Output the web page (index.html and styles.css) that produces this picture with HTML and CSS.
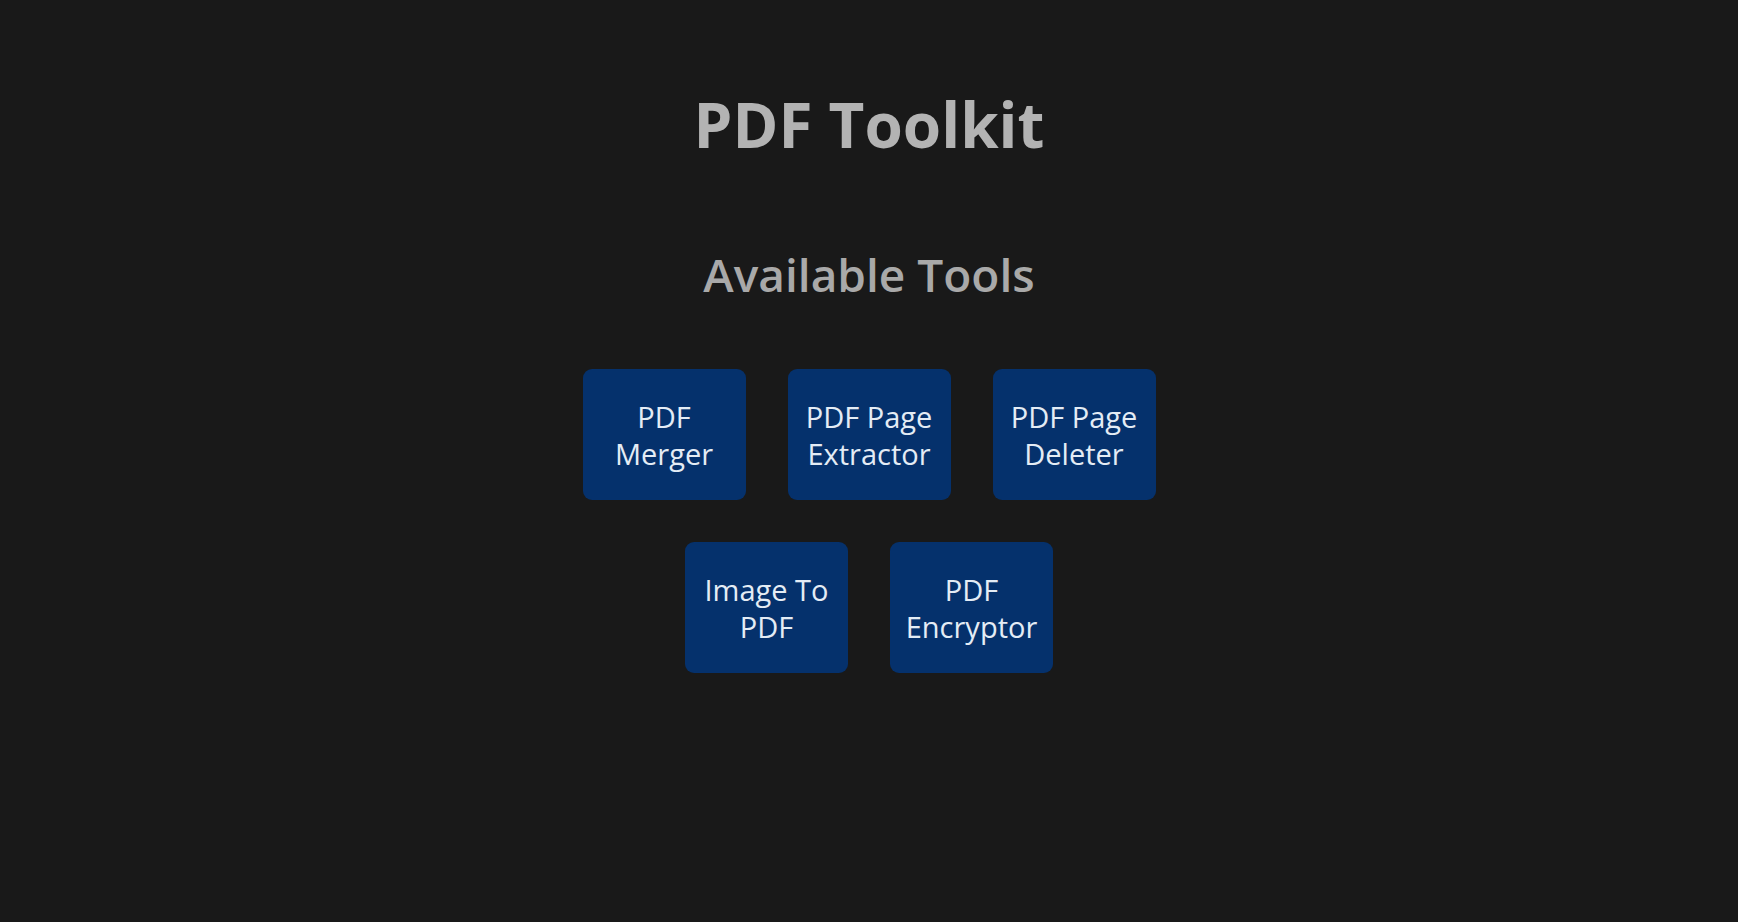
FILE: index.html
```html
<!DOCTYPE html>
<html lang="en">
<head>
<meta charset="utf-8">
<title>PDF Toolkit</title>
<link rel="stylesheet" href="styles.css">
</head>
<body>
<main class="page">
  <h1 class="title">PDF Toolkit</h1>
  <h2 class="subtitle">Available Tools</h2>
  <div class="tools">
    <a class="tool" href="#">PDF Merger</a>
    <a class="tool" href="#">PDF Page Extractor</a>
    <a class="tool" href="#">PDF Page Deleter</a>
    <a class="tool" href="#">Image To PDF</a>
    <a class="tool" href="#">PDF Encryptor</a>
  </div>
</main>
</body>
</html>
```

FILE: styles.css
```css
html, body {
  margin: 0;
  padding: 0;
  background: #191919;
}
body {
  font-family: "Open Sans", "Noto Sans", sans-serif;
  min-height: 922px;
}
.page {
  display: flex;
  flex-direction: column;
  align-items: center;
  padding-top: 88px;
}
.title {
  margin: 0;
  font-size: 62px;
  line-height: 72px;
  font-weight: 700;
  color: #b3b3b3;
}
.subtitle {
  margin: 86px 0 0;
  font-size: 46px;
  line-height: 56px;
  font-weight: 600;
  color: #a9a9a9;
}
.tools {
  margin-top: 67px;
  width: 600px;
  display: flex;
  flex-wrap: wrap;
  justify-content: center;
  gap: 42px;
}
.tool {
  width: 163px;
  height: 131px;
  box-sizing: border-box;
  border-radius: 9px;
  background: #05316c;
  color: #e4ecf5;
  text-decoration: none;
  font-size: 29px;
  line-height: 37px;
  display: flex;
  align-items: center;
  justify-content: center;
  text-align: center;
  padding: 0 10px;
}
```
